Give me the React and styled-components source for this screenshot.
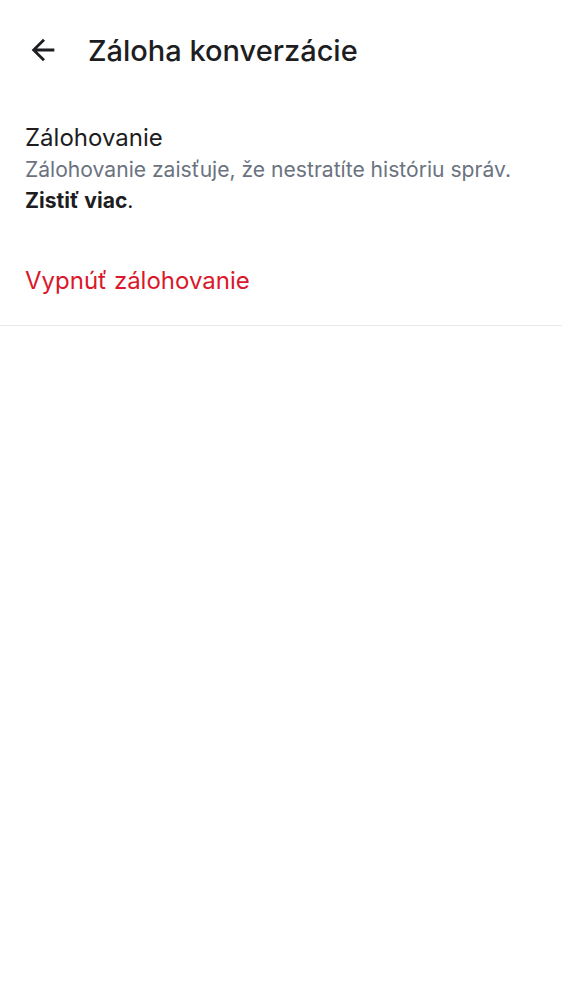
import React from 'react';
import styled, { createGlobalStyle } from 'styled-components';

const GlobalStyle = createGlobalStyle`
  body {
    margin: 0;
    background: #ffffff;
    font-family: Inter, "Noto Sans", sans-serif;
    color: #1d1d22;
  }
`;

const Page = styled.div`
  width: 562px;
  min-height: 1000px;
  background: #fff;
`;

const Toolbar = styled.header`
  display: flex;
  align-items: center;
  height: 100px;
  padding-left: 26px;
  box-sizing: border-box;
`;

const BackButton = styled.button`
  display: flex;
  align-items: center;
  justify-content: center;
  width: 34px;
  height: 34px;
  padding: 0;
  margin-right: 28px;
  border: none;
  background: none;
  color: #1d1d22;
`;

const Title = styled.h1`
  margin: 0;
  font-size: 29px;
  font-weight: 500;
  line-height: normal;
`;

const Section = styled.section`
  padding: 22px 25px 0;
`;

const Heading = styled.p`
  margin: 0;
  font-size: 24px;
  line-height: 32px;
  color: #1d1d22;
`;

const Description = styled.p`
  margin: 0;
  font-size: 21.1px;
  line-height: 31px;
  color: #6b7280;

  b {
    color: #1d1d22;
    font-weight: 700;
  }
  span {
    color: #1d1d22;
  }
`;

const DangerRow = styled.div`
  padding: 50px 25px 30px;
  border-bottom: 1px solid #e8e8ec;
  font-size: 24px;
  line-height: normal;
  color: #d9192b;
`;

export default function App() {
  return (
    <Page>
      <GlobalStyle />
      <Toolbar>
        <BackButton aria-label="Späť">
          <svg width="34" height="34" viewBox="0 0 24 24" fill="currentColor">
            <path d="M20 11H7.83l5.59-5.59L12 4l-8 8 8 8 1.41-1.41L7.83 13H20v-2z" />
          </svg>
        </BackButton>
        <Title>Záloha konverzácie</Title>
      </Toolbar>
      <Section>
        <Heading>Zálohovanie</Heading>
        <Description>
          Zálohovanie zaisťuje, že nestratíte históriu správ.
          <br />
          <b>Zistiť viac</b><span>.</span>
        </Description>
      </Section>
      <DangerRow>Vypnúť zálohovanie</DangerRow>
    </Page>
  );
}
